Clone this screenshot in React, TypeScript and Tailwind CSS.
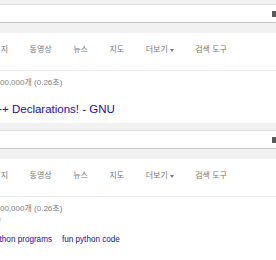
const font = { fontFamily: '"Liberation Sans", "Noto Sans CJK KR", sans-serif' };

function TopBar({ gap }: { gap: string }) {
  return (
    <div>
      <div className={`${gap} bg-[#f1f1f1]`} />
      <div className="h-[19px] flex items-center justify-end border-t border-b border-t-[#dcdcdc] border-b-[#c6c6c6] bg-white">
        <div className="w-[6px] h-[6px] -mr-[2px] bg-[#5a5a5a]" />
      </div>
      <div className="h-[10px] bg-[#f1f1f1]" />
    </div>
  );
}

function Tabs() {
  const tabs = ['동영상', '뉴스', '지도'];
  return (
    <div className="h-[38px] pb-[3px] flex items-center gap-[21.5px] border-b border-[#ebebeb] text-[8px] text-[#777] whitespace-nowrap">
      <span className="-ml-[14px]">이미지</span>
      {tabs.map((t) => (
        <span key={t}>{t}</span>
      ))}
      <span className="flex items-center gap-[2px]">
        더보기
        <span className="w-0 h-0 border-l-[2px] border-r-[2px] border-t-[3px] border-l-transparent border-r-transparent border-t-[#777]" />
      </span>
      <span>검색 도구</span>
    </div>
  );
}

function Count() {
  return <div className="pt-[6px] leading-[12px] text-[8px] text-[#808080] whitespace-nowrap">00,000개 (0.26초)</div>;
}

export default function App() {
  return (
    <div className="w-[276px] h-[260px] overflow-hidden bg-white" style={font}>
      <section className="h-[113px] overflow-hidden">
        <TopBar gap="h-[4px]" />
        <Tabs />
        <Count />
        <div className="mt-[13px] -ml-[13px] leading-[14px] text-[11.5px] text-[#1a0dab] whitespace-nowrap">
          C++ Declarations! - GNU
        </div>
      </section>
      <div className="h-[10px]" />
      <section>
        <TopBar gap="h-[7px]" />
        <Tabs />
        <Count />
        <div className="h-[12px] leading-[12px] text-[8px] text-[#bbb] -ml-[1px]">/</div>
        <div className="mt-[7px] flex gap-[10px] leading-[12px] text-[8.15px] text-[#1a0dab] whitespace-nowrap">
          <span className="-ml-[9px]">python programs</span>
          <span>fun python code</span>
        </div>
      </section>
    </div>
  );
}
